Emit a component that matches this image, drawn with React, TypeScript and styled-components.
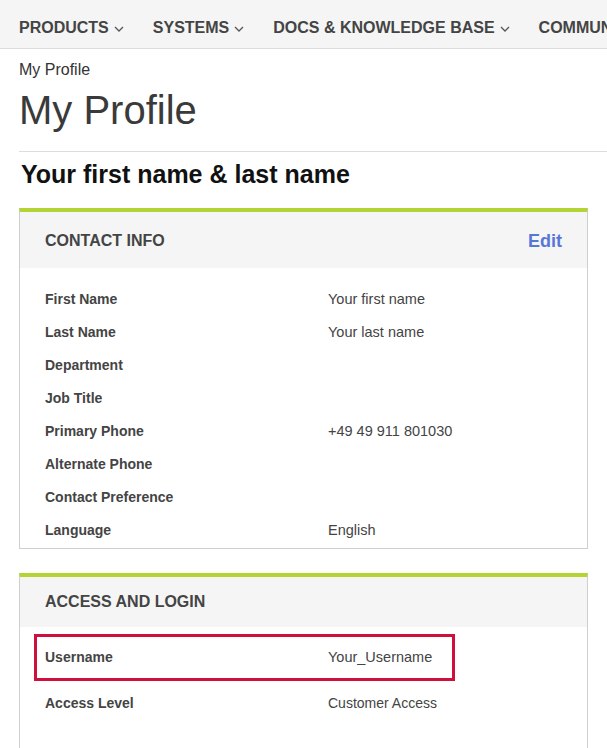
import styled, { createGlobalStyle } from "styled-components";

const GlobalStyle = createGlobalStyle`
  body {
    margin: 0;
    background: #fff;
    font-family: "Liberation Sans", Arial, sans-serif;
    color: #333;
  }
`;

const navItems = ["PRODUCTS", "SYSTEMS", "DOCS & KNOWLEDGE BASE", "COMMUNITY"];

const contactRows = [
  { label: "First Name", value: "Your first name" },
  { label: "Last Name", value: "Your last name" },
  { label: "Department", value: "" },
  { label: "Job Title", value: "" },
  { label: "Primary Phone", value: "+49 49 911 801030" },
  { label: "Alternate Phone", value: "" },
  { label: "Contact Preference", value: "" },
  { label: "Language", value: "English" },
];

const Chevron = () => (
  <svg width="10" height="6" viewBox="0 0 10 6" fill="none">
    <path d="M1 1l4 4 4-4" stroke="#555" strokeWidth="1.3" />
  </svg>
);

export default function App() {
  return (
    <>
      <GlobalStyle />
      <NavBar>
        {navItems.map((item) => (
          <NavItem key={item}>
            {item}
            <Chevron />
          </NavItem>
        ))}
      </NavBar>

      <Main>
        <Breadcrumb>My Profile</Breadcrumb>
        <PageTitle>My Profile</PageTitle>
        <Divider />
        <UserName>Your first name &amp; last name</UserName>

        <Card>
          <CardHeader tall>
            <CardTitle>CONTACT INFO</CardTitle>
            <EditLink href="#">Edit</EditLink>
          </CardHeader>
          <CardBody top={14} bottom={2}>
            {contactRows.map((row) => (
              <Row key={row.label} height={33}>
                <Label>{row.label}</Label>
                <Value>{row.value}</Value>
              </Row>
            ))}
          </CardBody>
        </Card>

        <Card>
          <CardHeader>
            <CardTitle>ACCESS AND LOGIN</CardTitle>
          </CardHeader>
          <CardBody top={7} bottom={60}>
            <Row height={46}>
              <Highlight />
              <Label>Username</Label>
              <Value>Your_Username</Value>
            </Row>
            <Row height={46}>
              <Label>Access Level</Label>
              <Value small>Customer Access</Value>
            </Row>
          </CardBody>
        </Card>
      </Main>
    </>
  );
}

const NavBar = styled.nav`
  display: flex;
  align-items: center;
  gap: 29px;
  height: 48px;
  padding: 0 19px;
  background: #f5f5f5;
  border-bottom: 1px solid #dcdcdc;
  white-space: nowrap;
  overflow: hidden;
`;

const NavItem = styled.span`
  display: flex;
  align-items: center;
  gap: 5px;
  font-size: 16px;
  font-weight: bold;
  color: #444;
  padding-top: 8px;

  svg {
    margin-top: 1px;
  }
`;

const Main = styled.main`
  padding: 0 19px;
`;

const Breadcrumb = styled.div`
  font-size: 16px;
  color: #333;
  margin-top: 11px;
  line-height: 20px;
`;

const PageTitle = styled.h1`
  margin: 5px 0 0;
  font-size: 40px;
  font-weight: normal;
  color: #3a3a3a;
  line-height: 50px;
`;

const Divider = styled.hr`
  margin: 16px -19px 0 0;
  border: 0;
  border-top: 1px solid #dcdcdc;
`;

const UserName = styled.h2`
  margin: 8px 0 0 2px;
  font-size: 25px;
  font-weight: bold;
  color: #111;
  line-height: 28px;
`;

const Card = styled.section`
  margin-top: 20px;
  border: 1px solid #cfcfcf;
  border-top: 4px solid #b4d335;

  & + & {
    margin-top: 24px;
  }
`;

const CardHeader = styled.div<{ tall?: boolean }>`
  display: flex;
  align-items: center;
  justify-content: space-between;
  box-sizing: border-box;
  height: ${(p) => (p.tall ? 56 : 50)}px;
  padding: ${(p) => (p.tall ? 2 : 0)}px 25px 0;
  background: #f5f5f5;
`;

const CardTitle = styled.h3`
  margin: 0;
  font-size: 16px;
  font-weight: bold;
  color: #444;
`;

const EditLink = styled.a`
  font-size: 18px;
  font-weight: bold;
  color: #5777d8;
  text-decoration: none;
`;

const CardBody = styled.div<{ top: number; bottom: number }>`
  padding: ${(p) => p.top}px 25px ${(p) => p.bottom}px;
`;

const Row = styled.div<{ height: number }>`
  position: relative;
  display: grid;
  grid-template-columns: 283px 1fr;
  align-items: center;
  height: ${(p) => p.height}px;
`;

const Label = styled.span`
  font-size: 14px;
  font-weight: bold;
  color: #444;
`;

const Value = styled.span<{ small?: boolean }>`
  font-size: ${(p) => (p.small ? 14 : 14.5)}px;
  color: #444;
`;

const Highlight = styled.div`
  position: absolute;
  left: -11px;
  top: 0;
  width: 421px;
  height: 47px;
  box-sizing: border-box;
  border: 3px solid #cf103d;
  pointer-events: none;
`;
